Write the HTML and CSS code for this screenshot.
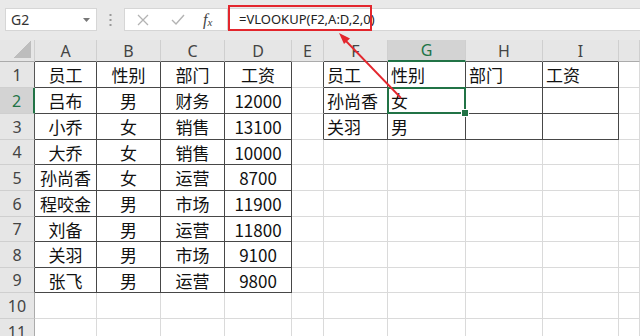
FILE: index.html
```html
<!DOCTYPE html>
<html lang="zh">
  <head>
    <meta charset="UTF-8" />
    <title>VLOOKUP</title>
    <link rel="stylesheet" href="styles.css">
  </head>
  <body>
    <div class="bar">
      <div class="namebox">
        <span>G2</span>
        <svg class="caret" width="7" height="4" viewBox="0 0 7 4"><path d="M0 0h7L3.5 4z" fill="#777"/></svg>
      </div>
      <svg class="grip" width="3" height="12" viewBox="0 0 3 12">
        <rect x="0.5" y="0" width="2" height="2" fill="#9a9a9a"/>
        <rect x="0.5" y="5" width="2" height="2" fill="#9a9a9a"/>
        <rect x="0.5" y="10" width="2" height="2" fill="#9a9a9a"/>
      </svg>
      <div class="fxbox">
        <svg width="12" height="12" viewBox="0 0 12 12"><path d="M1 1l10 10M11 1L1 11" stroke="#b3b3b3" stroke-width="1.3" fill="none"/></svg>
        <svg width="14" height="11" viewBox="0 0 14 11"><path d="M1 6l4 4L13 1" stroke="#b3b3b3" stroke-width="1.4" fill="none"/></svg>
        <span class="fx">f<sub>x</sub></span>
      </div>
      <div class="formula">
        <span class="formula-text">=VLOOKUP(F2,A:D,2,0)</span>
        <div class="callout"></div>
      </div>
    </div>

    <div class="sheet">
      <div class="corner"></div>
      <div class="ch dk">A</div><div class="ch dk">B</div><div class="ch dk">C</div><div class="ch dk">D</div>
      <div class="ch">E</div><div class="ch dk">F</div><div class="ch dk act">G</div><div class="ch dk">H</div><div class="ch dk">I</div><div class="ch"></div>

      <div class="rh dk">1</div>
      <div class="c b">员工</div><div class="c b">性别</div><div class="c b">部门</div><div class="c b">工资</div>
      <div class="c bl"></div><div class="c b l">员工</div><div class="c b l">性别</div><div class="c b l">部门</div><div class="c b l">工资</div><div class="c"></div>

      <div class="rh dk act">2</div>
      <div class="c b">吕布</div><div class="c b">男</div><div class="c b">财务</div><div class="c b">12000</div>
      <div class="c bl"></div><div class="c b l">孙尚香</div><div class="c b l sel">女</div><div class="c b"></div><div class="c b"></div><div class="c"></div>

      <div class="rh dk">3</div>
      <div class="c b">小乔</div><div class="c b">女</div><div class="c b">销售</div><div class="c b">13100</div>
      <div class="c bl"></div><div class="c b l">关羽</div><div class="c b l">男</div><div class="c b"></div><div class="c b"></div><div class="c"></div>

      <div class="rh dk">4</div>
      <div class="c b">大乔</div><div class="c b">女</div><div class="c b">销售</div><div class="c b">10000</div>
      <div class="c"></div><div class="c"></div><div class="c"></div><div class="c"></div><div class="c"></div><div class="c"></div>

      <div class="rh dk">5</div>
      <div class="c b">孙尚香</div><div class="c b">女</div><div class="c b">运营</div><div class="c b">8700</div>
      <div class="c"></div><div class="c"></div><div class="c"></div><div class="c"></div><div class="c"></div><div class="c"></div>

      <div class="rh dk">6</div>
      <div class="c b">程咬金</div><div class="c b">男</div><div class="c b">市场</div><div class="c b">11900</div>
      <div class="c"></div><div class="c"></div><div class="c"></div><div class="c"></div><div class="c"></div><div class="c"></div>

      <div class="rh dk">7</div>
      <div class="c b">刘备</div><div class="c b">男</div><div class="c b">运营</div><div class="c b">11800</div>
      <div class="c"></div><div class="c"></div><div class="c"></div><div class="c"></div><div class="c"></div><div class="c"></div>

      <div class="rh dk">8</div>
      <div class="c b">关羽</div><div class="c b">男</div><div class="c b">市场</div><div class="c b">9100</div>
      <div class="c"></div><div class="c"></div><div class="c"></div><div class="c"></div><div class="c"></div><div class="c"></div>

      <div class="rh dk">9</div>
      <div class="c b">张飞</div><div class="c b">男</div><div class="c b">运营</div><div class="c b">9800</div>
      <div class="c"></div><div class="c"></div><div class="c"></div><div class="c"></div><div class="c"></div><div class="c"></div>

      <div class="rh">10</div>
      <div class="c"></div><div class="c"></div><div class="c"></div><div class="c"></div>
      <div class="c"></div><div class="c"></div><div class="c"></div><div class="c"></div><div class="c"></div><div class="c"></div>

      <div class="rh">11</div>
      <div class="c"></div><div class="c"></div><div class="c"></div><div class="c"></div>
      <div class="c"></div><div class="c"></div><div class="c"></div><div class="c"></div><div class="c"></div><div class="c"></div>
    </div>

    <!-- annotation arrow from G2 to the formula -->
    <svg class="arrow" width="640" height="336" viewBox="0 0 640 336">
      <line x1="401" y1="98" x2="345" y2="40" stroke="#e3262d" stroke-width="1.8"/>
      <polygon points="339,33 350,38.5 344,44" fill="#e3262d"/>
    </svg>
  </body>
</html>
```

FILE: styles.css
```css
* {
  box-sizing: border-box;
}

body {
  margin: 0;
  width: 640px;
  height: 336px;
  overflow: hidden;
  position: relative;
  background: #fff;
  font-family: 'Noto Sans CJK SC', 'Noto Sans', sans-serif;
}

.bar {
  display: flex;
  align-items: flex-start;
  height: 40px;
  padding-top: 8px;
  background: #e9e9e9;
}
.namebox {
  display: flex;
  align-items: center;
  justify-content: space-between;
  margin-left: 5px;
  width: 92px;
  height: 23px;
  padding: 0 6px 0 5px;
  background: #fff;
  border: 1px solid #d6d6d6;
  font-family: 'Noto Sans', sans-serif;
  font-size: 14px;
  color: #333;
}
.grip {
  margin: 6px 0 0 12px;
}
.fxbox {
  display: flex;
  align-items: center;
  margin-left: 12px;
  width: 104px;
  height: 23px;
  padding-left: 12px;
  gap: 22px;
  background: #fff;
  border: 1px solid #d6d6d6;
}
.fx {
  font-family: 'Liberation Serif', serif;
  font-style: italic;
  font-size: 16px;
  color: #444;
  margin-left: -4px;
  line-height: 1;
}
.fx sub {
  font-size: 11px;
  vertical-align: -1px;
}
.formula {
  position: relative;
  flex: 1;
  height: 23px;
  padding-left: 10px;
  background: #fff;
  border: 1px solid #d6d6d6;
  border-right: 0;
  font-family: 'Noto Sans', sans-serif;
  font-size: 13px;
  line-height: 21px;
  color: #222;
}
.callout {
  position: absolute;
  left: -1px;
  top: -4px;
  width: 144px;
  height: 26px;
  border: 2px solid #e3262d;
}

.sheet {
  display: grid;
  grid-template-columns: 35px 62px 64px 64px 67px 32px 64px 78px 77px 76px 1fr;
  grid-template-rows: 22px 26px 26px 26px 25px 26px 26px 25px 26px 25px 26px 26px;
  font-size: 17px;
  color: #111;
}
.corner {
  position: relative;
  background: #e6e6e6;
  border-right: 1px solid #cfcfcf;
  border-bottom: 1px solid #ababab;
}
.corner::after {
  content: '';
  position: absolute;
  right: 3px;
  bottom: 3px;
  width: 17px;
  height: 17px;
  background: linear-gradient(to bottom right, transparent 50%, #bdbdbd 50%);
}
.ch {
  display: flex;
  align-items: center;
  justify-content: center;
  background: #e6e6e6;
  border-right: 1px solid #cfcfcf;
  border-bottom: 1px solid #ababab;
  font-family: 'Noto Sans', sans-serif;
  font-size: 16px;
  color: #444;
}
.ch.dk {
  border-bottom-color: #555;
}
.ch.act {
  background: #d3d3d3;
  color: #217346;
  border-bottom: 2px solid #217346;
}
.rh {
  display: flex;
  align-items: center;
  justify-content: center;
  background: #e6e6e6;
  border-right: 1px solid #ababab;
  border-bottom: 1px solid #cfcfcf;
  font-family: 'Noto Sans', sans-serif;
  font-size: 16px;
  color: #444;
}
.rh.dk {
  border-right-color: #555;
}
.rh.act {
  background: #d3d3d3;
  color: #217346;
  border-right: 2px solid #217346;
}
.c {
  display: flex;
  align-items: center;
  justify-content: center;
  border-right: 1px solid #dadada;
  border-bottom: 1px solid #dadada;
  white-space: nowrap;
}
.c.b {
  border-right-color: #474747;
  border-bottom-color: #474747;
}
.c.bl {
  border-right-color: #474747;
}
.c.l {
  justify-content: flex-start;
  padding-left: 3px;
}
.sel {
  position: relative;
}
.sel::before {
  content: '';
  position: absolute;
  left: -1px;
  top: -1px;
  right: -1px;
  bottom: -1px;
  border: 2px solid #217346;
}
.sel::after {
  content: '';
  position: absolute;
  right: -4px;
  bottom: -4px;
  width: 6px;
  height: 6px;
  background: #217346;
  border: 1px solid #fff;
}

.arrow {
  position: absolute;
  left: 0;
  top: 0;
  pointer-events: none;
}
```
